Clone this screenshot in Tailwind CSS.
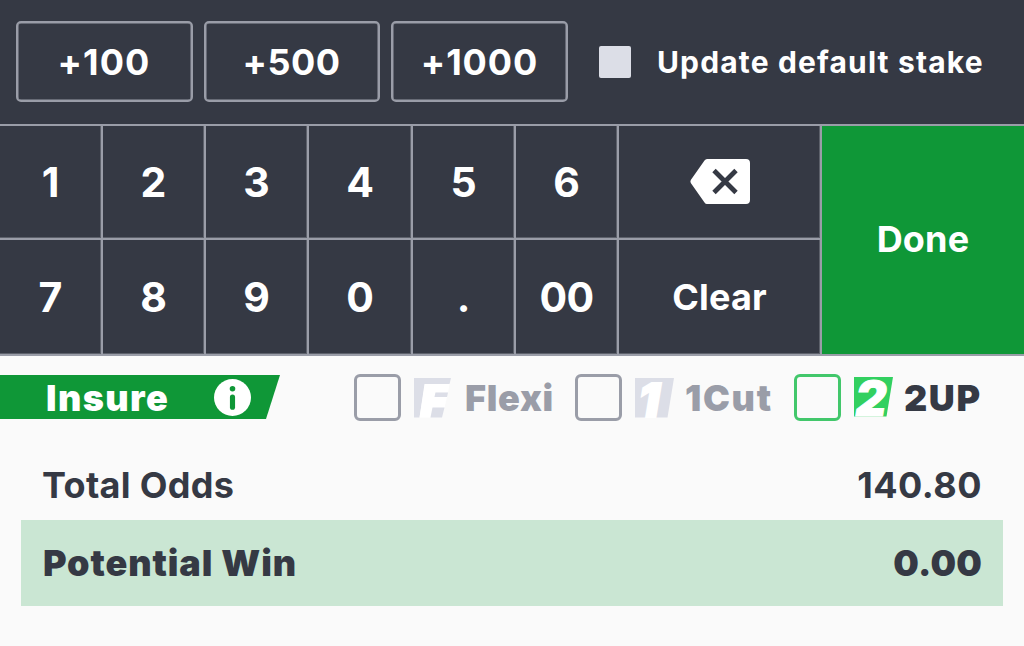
<!DOCTYPE html>
<html lang="en">
<head>
  <meta charset="UTF-8" />
  <meta name="viewport" content="width=device-width, initial-scale=1.0" />
  <title>Betslip</title>
  <script src="https://cdn.jsdelivr.net/npm/@tailwindcss/browser@4"></script>
</head>
<body class="bg-[#fafafa] w-[1024px] h-[646px] overflow-hidden font-['Inter',sans-serif] text-[#353944]">

  <!-- Quick stake bar -->
  <div class="bg-[#353944] h-[124px] flex items-start pl-4 pt-[21px] text-white font-bold">
    <div class="flex gap-[11px] text-[36px] *:shadow-[inset_0_0_0_0.5px_#9a9da8]">
      <button class="w-[177px] h-[81px] border-2 border-[#9a9da8] rounded-[5px] tracking-[1.1px] pr-px">+100</button>
      <button class="w-[176px] h-[81px] border-2 border-[#9a9da8] rounded-[5px] tracking-[0.5px] pr-px">+500</button>
      <button class="w-[177px] h-[81px] border-2 border-[#9a9da8] rounded-[5px] tracking-[0.9px]">+1000</button>
    </div>
    <label class="flex items-center h-[81px] ml-[31px] gap-[26px] whitespace-nowrap">
      <div class="size-8 bg-[#dcdee7] rounded-[2px]"></div>
      <span class="text-[30px] tracking-[1.15px] pt-[2px]">Update default stake</span>
    </label>
  </div>

  <!-- Keypad -->
  <div class="bg-[#9a9da8] h-[232px] py-[2px] grid grid-cols-[101px_101px_101px_102px_101px_101px_201px_202px] grid-rows-[112px_114px] gap-[2px] text-white font-bold text-[41px] *:flex *:items-center *:justify-center *:bg-[#353944] *:shadow-[inset_-1px_-1px_0_#9a9da866]">
    <button class="pt-[2px]">1</button>
    <button class="pt-[2px]">2</button>
    <button class="pt-[2px]">3</button>
    <button class="pt-[2px]">4</button>
    <button class="pt-[2px]">5</button>
    <button class="pt-[2px]">6</button>
    <button class="pb-px">
      <svg class="w-[60px] h-[45px]" viewBox="0 0 60 45">
        <path d="M17 0H56Q60 0 60 4V41Q60 45 56 45H17Q15.500 45 14.500 43.500L0.800 24Q0 22.500 0.800 21L14.500 1.500Q15.500 0 17 0Z" fill="#fff" />
        <path d="M24 11.500L46 33.500M46 11.500L24 33.500" stroke="#353944" stroke-width="4.800" />
      </svg>
    </button>
    <button class="row-span-2 bg-[#0f9737]! shadow-none! text-[36px] tracking-[0.2px] pb-[2px]">Done</button>
    <button class="pt-[2px]">7</button>
    <button class="pt-[2px]">8</button>
    <button class="pt-[2px]">9</button>
    <button class="pt-[2px]">0</button>
    <button class="pt-[2px]">.</button>
    <button class="pt-[2px] tracking-[-0.6px]">00</button>
    <button class="text-[36px] tracking-[0.2px]">Clear</button>
  </div>

  <!-- Bet options -->
  <div class="flex items-center h-[47px] mt-[18px] text-[36px] font-black text-[#9a9da8] whitespace-nowrap">
    <div class="bg-[#0f9737] w-[280px] h-[44px] mb-px pt-px pl-[46px] flex items-center text-white [clip-path:polygon(0_0,100%_0,266px_100%,0_100%)]">
      <span class="w-[168px] tracking-[1.4px]">Insure</span>
      <svg class="size-[37px]" viewBox="0 0 36 36">
        <circle cx="18" cy="18" r="18" fill="#fff" />
        <circle cx="18" cy="9.500" r="2.700" fill="#0f9737" />
        <path d="M18 17.500V27.500" stroke="#0f9737" stroke-width="5" stroke-linecap="round" />
      </svg>
    </div>

    <label class="flex items-center ml-[74px] w-[221px]">
      <div class="w-[47px] h-[47px] border-3 border-[#9a9da8] rounded-[6px]"></div>
      <svg class="w-[40px] h-[40px] ml-[13px]" viewBox="0 0 40 40">
        <path d="M0 0H37L35.500 6H11L5.500 39.500H0Z" fill="#dcdee7" />
        <path d="M10.500 6H35.500L34 14.500H21.500L20.500 19H33L30.500 30H18.500L16.500 39.500H5.500Z" fill="#fff" />
        <path d="M21.500 14.500H34L33 19H20.500ZM18.500 29.500H30.500L28 39.500H16.500Z" fill="#dcdee7" />
      </svg>
      <span class="ml-[11px] tracking-[0.7px]">Flexi</span>
    </label>

    <label class="flex items-center w-[219px]">
      <div class="w-[47px] h-[47px] border-3 border-[#9a9da8] rounded-[6px]"></div>
      <svg class="w-[40px] h-[40px] ml-[13px] overflow-visible" viewBox="0 0 40 40">
        <path d="M0 0H39L32.500 39.500H0Z" fill="#dcdee7" />
        <text x="3.500" y="39" font-size="47" font-style="italic" font-weight="900" fill="#fff" stroke="#fff" stroke-width="2">1</text>
      </svg>
      <span class="ml-[10px] tracking-[1.7px]">1Cut</span>
    </label>

    <label class="flex items-center text-[#353944]">
      <div class="w-[47px] h-[47px] border-3 border-[#42c76b] rounded-[6px]"></div>
      <svg class="w-[40px] h-[40px] ml-[13px] mb-[2px] overflow-visible" viewBox="0 0 40 40">
        <path d="M0 0H39L32.500 39.500H0Z" fill="#32d060" />
        <text x="1.500" y="38.500" font-size="48" font-style="italic" font-weight="900" fill="#fff" stroke="#fff" stroke-width="1">2</text>
      </svg>
      <span class="ml-[10px] tracking-[1.6px]">2UP</span>
    </label>
  </div>

  <!-- Totals -->
  <div class="mt-[29px] px-[42px] h-[70px] flex items-center justify-between text-[36px] font-bold">
    <span class="tracking-[0.3px]">Total Odds</span>
    <span class="tracking-[0.5px]">140.80</span>
  </div>
  <div class="mx-[21px] pl-[22px] pr-[21px] h-[86px] bg-[#cae6d3] flex items-center justify-between text-[36px] font-black">
    <span class="tracking-[0.9px]">Potential Win</span>
    <span class="tracking-[0.2px]">0.00</span>
  </div>

</body>
</html>
